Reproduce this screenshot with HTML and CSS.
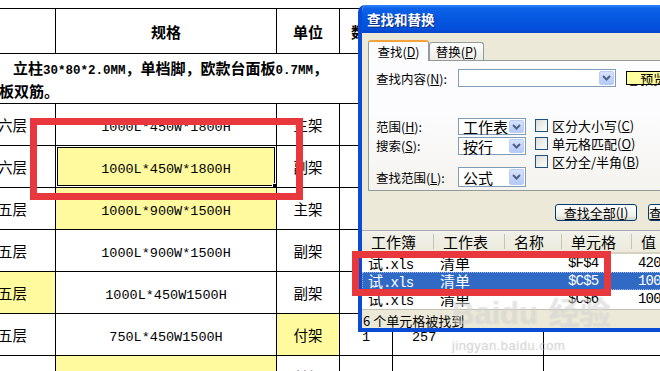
FILE: index.html
```html
<!DOCTYPE html>
<html lang="zh-CN">
<head>
    <meta charset="UTF-8">
    <title>查找和替换</title>
    <link rel="stylesheet" href="styles.css">
</head>
<body>
    <table class="sheet">
        <colgroup>
            <col class="c1"><col class="c2"><col class="c3"><col class="c4"><col class="c5"><col class="c6">
        </colgroup>
        <tr class="r-head">
            <td></td>
            <td class="bold">规格</td>
            <td class="bold">单位</td>
            <td class="bold">数量</td>
            <td></td>
            <td></td>
        </tr>
        <tr class="r-note">
            <td colspan="6" class="note">立柱<span class="mb">30*80*2.0MM</span>，单档脚，欧款台面板<span class="mb">0.7MM</span>，<br>板双筋。</td>
        </tr>
        <tr class="r">
            <td>六层</td>
            <td><span class="m">1000L*450W*1800H</span></td>
            <td>主架</td>
            <td></td><td></td><td></td>
        </tr>
        <tr class="r">
            <td>六层</td>
            <td class="yel sel"><span class="m">1000L*450W*1800H</span></td>
            <td>副架</td>
            <td></td><td></td><td></td>
        </tr>
        <tr class="r">
            <td>五层</td>
            <td class="yel"><span class="m">1000L*900W*1500H</span></td>
            <td>主架</td>
            <td></td><td></td><td></td>
        </tr>
        <tr class="r">
            <td>五层</td>
            <td><span class="m">1000L*900W*1500H</span></td>
            <td>副架</td>
            <td></td><td></td><td></td>
        </tr>
        <tr class="r">
            <td class="yel">五层</td>
            <td><span class="m">1000L*450W1500H</span></td>
            <td>副架</td>
            <td></td><td></td><td></td>
        </tr>
        <tr class="r">
            <td>五层</td>
            <td><span class="m">750L*450W1500H</span></td>
            <td class="yel">付架</td>
            <td><span class="m">1</span></td>
            <td class="qty"><span class="m">257</span></td>
            <td></td>
        </tr>
        <tr class="r">
            <td>四层</td>
            <td class="yel"></td>
            <td>付架</td>
            <td></td><td></td><td></td>
        </tr>
    </table>

    <div class="dlg">
        <div class="dlg-title">查找和替换</div>
        <div class="dlg-body">
            <div class="tabs">
                <span class="tab on">查找(<u>D</u>)</span>
                <span class="tab">替换(<u>P</u>)</span>
            </div>
            <div class="panel">
                <div class="find-row">
                    <span class="lbl">查找内容(<u>N</u>):</span>
                    <div class="combo wide"><span class="drop"><svg width="9" height="6" viewBox="0 0 9 6"><path d="M1 1 L4.5 4.5 L8 1" fill="none" stroke="#4d6185" stroke-width="2"/></svg></span></div>
                    <div class="preview">_ 预览*</div>
                </div>
                <div class="opts">
                    <div class="opt-grid">
                        <span class="lbl l1">范围(<u>H</u>):</span>
                        <div class="combo s1">工作表<span class="drop"><svg width="9" height="6" viewBox="0 0 9 6"><path d="M1 1 L4.5 4.5 L8 1" fill="none" stroke="#4d6185" stroke-width="2"/></svg></span></div>
                        <span class="lbl l2">搜索(<u>S</u>):</span>
                        <div class="combo s2">按行<span class="drop"><svg width="9" height="6" viewBox="0 0 9 6"><path d="M1 1 L4.5 4.5 L8 1" fill="none" stroke="#4d6185" stroke-width="2"/></svg></span></div>
                        <span class="lbl l3">查找范围(<u>L</u>):</span>
                        <div class="combo s3">公式<span class="drop"><svg width="9" height="6" viewBox="0 0 9 6"><path d="M1 1 L4.5 4.5 L8 1" fill="none" stroke="#4d6185" stroke-width="2"/></svg></span></div>
                    </div>
                    <div class="checks">
                        <label class="chk"><span class="box"></span>区分大小写(<u>C</u>)</label>
                        <label class="chk"><span class="box"></span>单元格匹配(<u>O</u>)</label>
                        <label class="chk"><span class="box"></span>区分全/半角(<u>B</u>)</label>
                    </div>
                </div>
            </div>
            <div class="btns">
                <span class="btn">查找全部(<u>I</u>)</span>
                <span class="btn">查找下一个(<u>F</u>)</span>
            </div>
            <div class="list">
                <div class="lrow head">
                    <span class="k1">工作簿</span><span class="k2">工作表</span><span class="k3">名称</span><span class="k4">单元格</span><span class="k5">值</span>
                </div>
                <div class="lrow">
                    <span class="k1">试<span class="lm">.xls</span></span><span class="k2">清单</span><span class="k3"></span><span class="k4 lm">$F$4</span><span class="k5 lm">420</span>
                </div>
                <div class="lrow cur">
                    <span class="k1">试<span class="lm">.xls</span></span><span class="k2">清单</span><span class="k3"></span><span class="k4 lm">$C$5</span><span class="k5 lm">100</span>
                </div>
                <div class="lrow">
                    <span class="k1">试<span class="lm">.xls</span></span><span class="k2">清单</span><span class="k3"></span><span class="k4 lm">$C$6</span><span class="k5 lm">100</span>
                </div>
            </div>
            <div class="status">6 个单元格被找到</div>
        </div>
    </div>

    <div class="mark mark-a"></div>
    <div class="mark mark-b"></div>

    <div class="wm">
        <div class="wm-logo">Bai<span class="wm-du">du</span> 经验</div>
        <div class="wm-url">jingyan.baidu.com</div>
    </div>
</body>
</html>
```

FILE: styles.css
```css
body {
    margin: 0;
    width: 660px;
    height: 371px;
    overflow: hidden;
    position: relative;
    background: #fff;
    font-family: "Noto Sans CJK SC", sans-serif;
    color: #000;
}
.sheet {
    border-collapse: collapse;
    table-layout: fixed;
    width: 774px;
    margin: 8px 0 0 -31px;
    font-size: 14.5px;
}
.c1 { width: 86px; }
.c2 { width: 221px; }
.c3 { width: 63px; }
.c4 { width: 53px; }
.c5 { width: 151px; }
.c6 { width: 200px; }
.sheet td {
    border: 1px solid #000;
    padding: 0;
    text-align: center;
    white-space: nowrap;
    overflow: hidden;
}
.r-head td { height: 44px; }
.r-note td { height: 49px; }
.r td { height: 41px; }
.bold {
    font-weight: bold;
    font-size: 15px;
}
.note {
    text-align: left !important;
    font-weight: bold;
    font-size: 15px;
    line-height: 19px;
    padding-left: 29px !important;
    text-indent: 14px;
}
.m {
    font-family: "Liberation Mono", monospace;
    font-size: 13.5px;
}
.mb {
    font-family: "Liberation Mono", monospace;
    font-size: 12.5px;
}
.yel { background: #fffa9e; }
.sel {
    position: relative;
    box-shadow: inset 0 0 0 1px #fff, inset 0 0 0 2px #000;
}
.sel::after {
    content: "";
    position: absolute;
    right: -3px;
    bottom: -3px;
    width: 5px;
    height: 5px;
    background: #000;
    border: 1px solid #fff;
}
.sheet td.qty {
    text-align: left;
    padding-left: 19px;
}

/* dialog */
.dlg {
    position: absolute;
    left: 358px;
    top: 5px;
    width: 330px;
    height: 327px;
    box-sizing: border-box;
    border: 4px solid #0a4bd6;
    border-top: 0;
    border-radius: 7px 7px 0 0;
    background: #ece9d8;
    font-size: 12.5px;
    overflow: hidden;
}
.dlg-title {
    height: 28px;
    line-height: 29px;
    padding-left: 5px;
    color: #fff;
    font-weight: bold;
    font-size: 13.5px;
    background: linear-gradient(#2f86ff 0, #0d62e8 12%, #0557e0 50%, #0450dc 85%, #0443c9 100%);
    text-shadow: 1px 1px 0 #0a2a80;
}
.dlg-body {
    padding-top: 7px;
}
.tabs {
    display: flex;
    align-items: flex-end;
    margin-left: 6px;
    height: 20px;
    position: relative;
    z-index: 1;
}
.tab {
    height: 18px;
    line-height: 18px;
    width: 55px;
    box-sizing: border-box;
    border: 1px solid #919b9c;
    border-bottom: 0;
    border-radius: 3px 3px 0 0;
    background: linear-gradient(#fff, #ecebe5);
    color: #000;
    white-space: nowrap;
    text-align: center;
    font-size: 12.5px;
}
.tab.on {
    width: 61px;
    height: 21px;
    line-height: 19px;
    margin-bottom: -1px;
    background: #fcfcfe;
    border-top: 2px solid #f3a43a;
}
u { text-decoration: underline; text-underline-offset: 1px; }
.panel {
    margin-left: 6px;
    height: 131px;
    box-sizing: border-box;
    border: 1px solid #919b9c;
    border-right: 0;
    background: linear-gradient(#fcfcfe 40%, #f4f3ee);
    padding: 8px 0 0 7px;
}
.find-row {
    display: flex;
    align-items: center;
    height: 18px;
}
.lbl {
    width: 82px;
    flex: none;
    white-space: nowrap;
}
.combo {
    position: relative;
    box-sizing: border-box;
    border: 1px solid #7f9db9;
    background: #fff;
    padding-left: 4px;
    font-size: 15px;
    display: flex;
    align-items: center;
}
.combo.wide {
    width: 164px;
    height: 18px;
}
.drop {
    position: absolute;
    right: 1px;
    top: 1px;
    bottom: 1px;
    width: 15px;
    border-radius: 2px;
    background: linear-gradient(#d7e3fd, #b5c9f8);
    border: 1px solid #b9cdf8;
    box-sizing: border-box;
    display: flex;
    align-items: center;
    justify-content: center;
}
.preview {
    margin-left: 10px;
    width: 60px;
    height: 14px;
    line-height: 13px;
    box-sizing: border-box;
    border: 1px solid #000;
    background: #ffffa0;
    font-size: 13px;
    padding-left: 3px;
    white-space: nowrap;
}
.opts {
    display: flex;
    margin-top: 30px;
}
.opt-grid {
    display: grid;
    grid-template-columns: 82px 68px;
    align-items: center;
}
.combo.s1 { height: 17px; }
.combo.s2 { height: 18px; margin-top: 1px; }
.combo.s3 { height: 20px; margin-top: 12px; }
.l3 { margin-top: 12px; }
.checks {
    margin: 2px 0 0 9px;
    display: flex;
    flex-direction: column;
    gap: 5px;
}
.chk {
    display: flex;
    align-items: center;
    height: 13px;
    white-space: nowrap;
    font-size: 13px;
}
.box {
    width: 13px;
    height: 13px;
    box-sizing: border-box;
    border: 1px solid #1c5180;
    background: linear-gradient(135deg, #dcdcd7, #fff);
    margin-right: 4px;
}
.btns {
    display: flex;
    gap: 11px;
    margin: 13px 0 0 193px;
}
.btn {
    flex: none;
    width: 82px;
    height: 17px;
    line-height: 16px;
    box-sizing: border-box;
    border: 1px solid #003c74;
    border-radius: 3px;
    background: linear-gradient(#fff, #f0f0ea 70%, #d6d0c5);
    text-align: center;
    white-space: nowrap;
    font-size: 13px;
}
.list {
    margin-top: 9px;
    height: 78px;
    overflow: hidden;
    background: #fff;
    border-top: 1px solid #a5acb5;
}
.lrow {
    display: flex;
    height: 18px;
    line-height: 18px;
    font-size: 15px;
    white-space: nowrap;
}
.lrow.head {
    height: 21px;
    line-height: 21px;
    background: linear-gradient(#f2f1ea, #ebeadb);
    border-bottom: 2px solid #d6d2c2;
}
.lrow > span {
    flex: none;
    box-sizing: border-box;
    padding-left: 6px;
}
.head > span {
    padding-left: 9px;
    border-right: 1px solid #c7c5b2;
    height: 15px;
    line-height: 16px;
    margin-top: 3px;
}
.k1 { width: 72px; }
.k2 { width: 71px; }
.k3 { width: 57px; }
.k4 { width: 70px; }
.k5 { width: 60px; }
.lm {
    font-family: "Liberation Mono", monospace;
    font-size: 14px;
    letter-spacing: -0.8px;
}
.lrow.cur {
    background: #316ac5;
    color: #fff;
    outline: 1px dotted #9fb8e6;
    outline-offset: -1px;
}
.status {
    height: 21px;
    line-height: 22px;
    padding-left: 1px;
    border-top: 1px solid #c4c1b0;
    font-size: 13px;
}

/* red highlight boxes */
.mark {
    position: absolute;
    box-sizing: border-box;
    border: 7px solid #e8383d;
}
.mark-a {
    left: 30px;
    top: 118px;
    width: 273px;
    height: 82px;
}
.mark-b {
    left: 352px;
    top: 251px;
    width: 259px;
    height: 45px;
}

/* watermark */
.wm {
    position: absolute;
    left: 452px;
    top: 296px;
    color: rgba(255, 255, 255, 0.4);
    text-shadow: 0 0 1px rgba(120, 120, 120, 0.3);
    font-family: "Liberation Sans", "Noto Sans CJK SC", sans-serif;
    pointer-events: none;
}
.wm-logo {
    font-size: 31px;
    font-weight: bold;
    line-height: 36px;
}
.wm-du { margin-right: 2px; }
.wm-url {
    font-size: 13px;
    margin-top: 6px;
    color: rgba(210, 210, 210, 0.45);
    letter-spacing: 0.5px;
}
```
